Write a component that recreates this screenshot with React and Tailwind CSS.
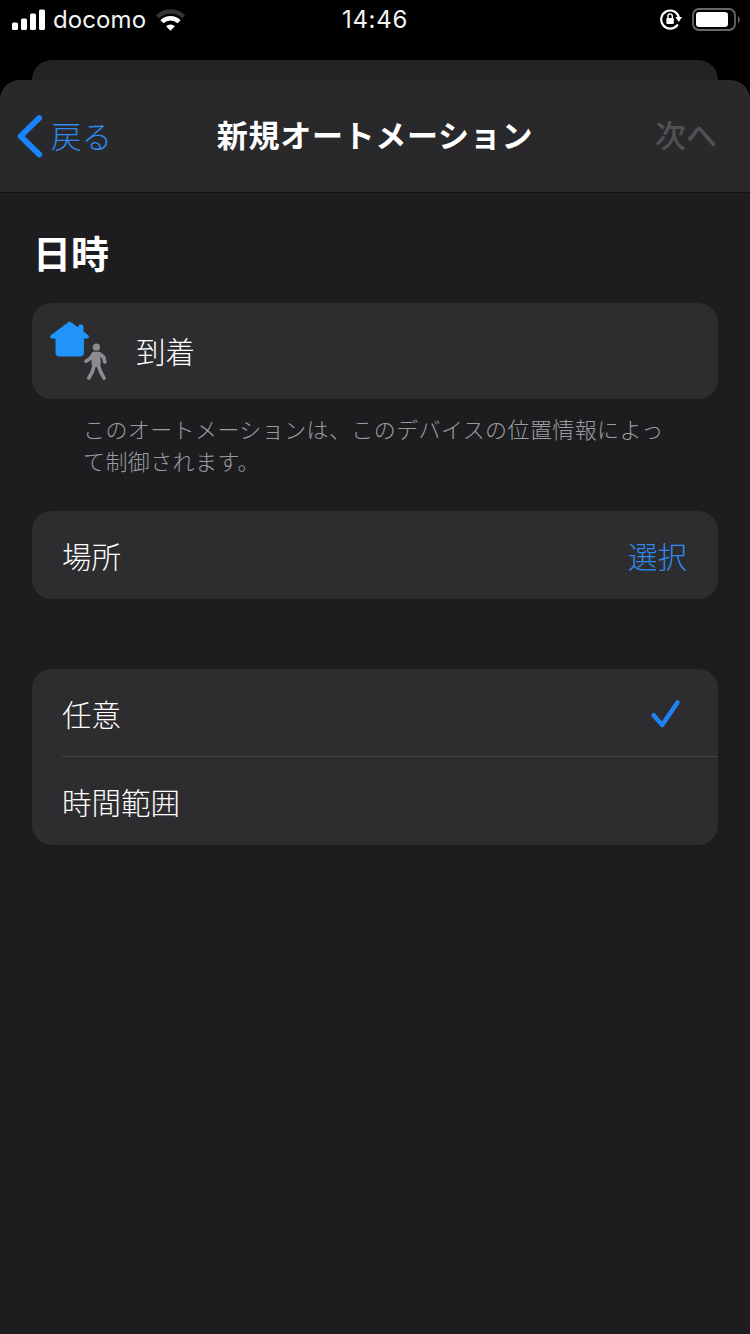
const SignalIcon = () => (
  <svg width="34" height="22" viewBox="0 0 34 22" fill="#fff">
    <rect x="0" y="13.5" width="6" height="7.5" rx="1.6" />
    <rect x="9" y="9.5" width="6" height="11.5" rx="1.6" />
    <rect x="18" y="4.5" width="6" height="16.5" rx="1.6" />
    <rect x="27" y="0.5" width="6" height="20.5" rx="1.6" />
  </svg>
);

const WifiIcon = () => (
  <svg width="30" height="22" viewBox="0 0 30 22" fill="none">
    <path d="M1.4 7.8A19 19 0 0 1 27.6 7.8" stroke="#333335" strokeWidth="4.4" />
    <path d="M6 12.8A12 12 0 0 1 23 12.8" stroke="#fff" strokeWidth="4.4" />
    <path
      d="M14.5 21.8L10.1 17.2A6.4 6.4 0 0 1 18.9 17.2Z"
      fill="#fff"
    />
  </svg>
);

const RotationLockIcon = () => (
  <svg width="22" height="22" viewBox="0 0 22 22" fill="none">
    <path
      d="M17.2 16.2A9 9 0 1 1 18.9 8.2"
      stroke="#fff"
      strokeWidth="2.2"
      strokeLinecap="round"
    />
    <path d="M15.4 8H22L18.8 13Z" fill="#fff" />
    <rect x="6.4" y="9" width="7.4" height="6" rx="0.8" fill="#fff" />
    <path
      d="M7.9 9.4V7.1A2.2 2.2 0 0 1 12.3 7.1V9.4"
      stroke="#fff"
      strokeWidth="1.4"
    />
  </svg>
);

const BatteryIcon = () => (
  <svg width="49" height="24" viewBox="0 0 49 24" fill="none">
    <rect
      x="1"
      y="1"
      width="42"
      height="21"
      rx="6"
      stroke="#68686a"
      strokeWidth="1.8"
    />
    <rect x="4" y="4" width="32" height="15" rx="3.2" fill="#fff" />
    <path d="M46 8V15.2Q47.8 14.2 47.8 11.6T46 8Z" fill="#68686a" />
  </svg>
);

const ChevronIcon = () => (
  <svg width="28" height="44" viewBox="0 0 28 44" fill="none">
    <path
      d="M23.2 4L4.6 22.2L23.2 40.4"
      stroke="#1a84fc"
      strokeWidth="5.8"
      strokeLinecap="round"
      strokeLinejoin="round"
    />
  </svg>
);

const ArriveIcon = () => (
  <svg width="58" height="62" viewBox="0 0 58 62" fill="none">
    <path
      d="M20 2.2L2 15.6Q0.8 18 3 18H7V33Q7 36 10 36H31.4Q34.4 36 34.4 33V18H38.4Q40.4 17.4 39.2 15.6L34 11.6V6.2Q34 5 32.8 5H31Q29.8 5 29.8 6.2V8.4L21.4 2.2Q20.7 1.7 20 2.2Z"
      fill="#2094fa"
      stroke="#2094fa"
      strokeWidth="1"
      strokeLinejoin="round"
    />
    <circle cx="47.4" cy="27.2" r="3.6" fill="#8b8b90" />
    <path
      d="M44.4 32.8H50L50.8 42.5L50.2 46H44L43.4 42.5Z"
      fill="#8b8b90"
      stroke="#8b8b90"
      strokeWidth="2"
      strokeLinejoin="round"
    />
    <g
      stroke="#8b8b90"
      strokeWidth="3.7"
      strokeLinecap="round"
      strokeLinejoin="round"
    >
      <path d="M44.6 33.6L41.4 38.4L37 41.2" />
      <path d="M50 33.6L54.6 37L55.8 42" />
      <path d="M45.4 45L43.2 52L39.8 58" />
      <path d="M49.2 45L51.6 51.6L55 58" />
    </g>
  </svg>
);

const CheckIcon = () => (
  <svg width="32" height="32" viewBox="0 0 32 32" fill="none">
    <path
      d="M3.6 18.2L12.2 28L27.6 5.2"
      stroke="#1f83f5"
      strokeWidth="4.4"
      strokeLinecap="round"
      strokeLinejoin="round"
    />
  </svg>
);

const StatusBar = () => (
  <div className="grid h-[60px] grid-cols-3 pb-5 font-['Inter','Liberation_Sans',sans-serif] text-[24px] leading-10 font-normal text-[#f4f4f4]">
    <div className="flex items-center pl-3">
      <SignalIcon />
      <span className="ml-[7px] w-[92px] tracking-[0.1px]">docomo</span>
      <span className="ml-[11px]">
        <WifiIcon />
      </span>
    </div>
    <div className="text-center tracking-[0.7px]">14:46</div>
    <div className="flex items-center justify-end gap-[10px] pr-[9px]">
      <RotationLockIcon />
      <BatteryIcon />
    </div>
  </div>
);

const App = () => {
  return (
    <div className="flex h-[1334px] w-[750px] flex-col overflow-hidden bg-black font-['Noto_Sans_CJK_JP',sans-serif] text-[29.5px] leading-[44px] font-light text-white">
      <StatusBar />
      <div className="mx-8 h-5 shrink-0 rounded-t-[20px] bg-[#232325]" />

      <div className="flex flex-1 flex-col overflow-hidden rounded-t-[20px] bg-[#1d1d1f]">
        <header className="flex h-[113px] shrink-0 items-center justify-between border-b border-[#111113] bg-[#29292b] pr-[33px] pl-4">
          <button className="flex w-[150px] items-center gap-[7px] text-[30.5px] text-[#2e8af0]">
            <ChevronIcon />
            <span className="pb-[3px]">戻る</span>
          </button>
          <h1 className="pb-1 text-[31px] font-bold tracking-[0.7px] whitespace-nowrap">
            新規オートメーション
          </h1>
          <button className="w-[133px] pb-1 text-right text-[31px] font-medium text-[#515153]">
            次へ
          </button>
        </header>

        <main className="px-8">
          <h2 className="pt-[33px] pb-px pl-px text-[38px] leading-[52px] font-bold">
            日時
          </h2>

          <section className="mt-6 flex h-24 items-center rounded-[20px] bg-[#2d2d2f] pl-[17px]">
            <ArriveIcon />
            <span className="ml-[29px] pb-[2px]">到着</span>
          </section>
          <p className="mt-[13px] ml-[51px] text-[22px] leading-8 tracking-[0.4px] text-[#9b9ba0]">
            このオートメーションは、このデバイスの位置情報によっ
            <br />
            て制御されます。
          </p>

          <section className="mt-[35px] flex h-[88px] items-center justify-between rounded-[20px] bg-[#2d2d2f] pr-[31px] pb-px pl-[30px]">
            <span>場所</span>
            <button className="text-[#2e8af0]">選択</button>
          </section>

          <section className="mt-[70px] rounded-[20px] bg-[#2d2d2f] pl-[30px]">
            <div className="flex h-[88px] items-center justify-between border-b border-[#464648] pr-9">
              <span>任意</span>
              <CheckIcon />
            </div>
            <div className="flex h-[88px] items-center">
              <span>時間範囲</span>
            </div>
          </section>
        </main>
      </div>
    </div>
  );
};

export default App;
